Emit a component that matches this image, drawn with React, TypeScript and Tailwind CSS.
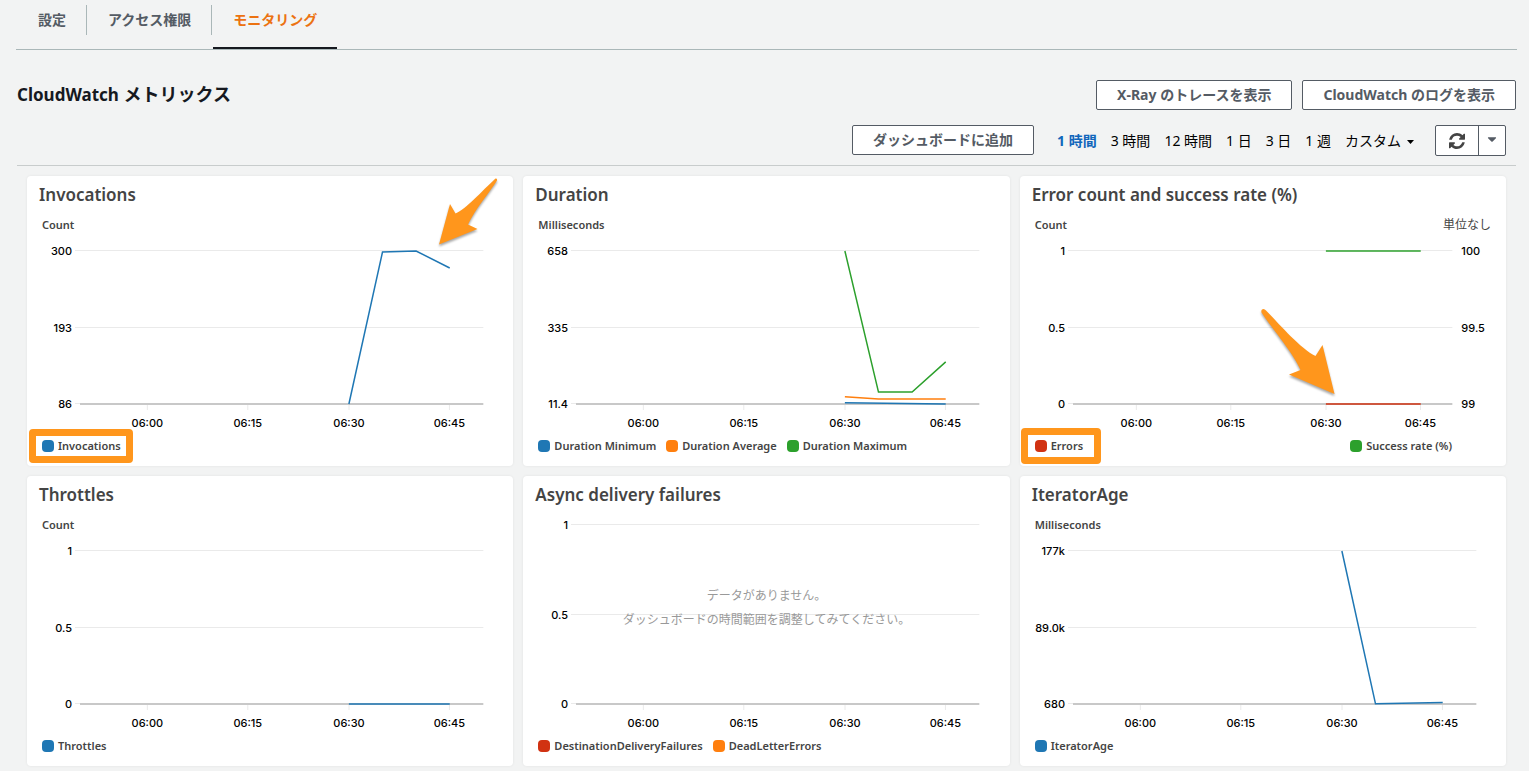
import { type ReactNode } from "react";
import { FaCaretDown } from "react-icons/fa";

type Side = "left" | "right";

interface Series {
  name: string;
  color: string;
  side?: Side;
  // minute offsets inside the visible hour (0 - 60) and y as a 0 - 1 share
  points: [number, number][];
}

interface Metric {
  title: string;
  unit?: string;
  rightUnit?: string;
  ticks: string[];
  rightTicks?: string[];
  series: Series[];
  empty?: string[];
}

const BLUE = "#1f77b4";
const ORANGE = "#ff7f0e";
const GREEN = "#2ca02c";
const RED = "#d13212";
const MARKER = "#ff961c";

const metrics: Metric[] = [
  {
    title: "Invocations",
    unit: "Count",
    ticks: ["300", "193", "86"],
    series: [
      {
        name: "Invocations",
        color: BLUE,
        points: [
          [40, 0],
          [45, 0.993],
          [50, 1],
          [55, 0.889],
        ],
      },
    ],
  },
  {
    title: "Duration",
    unit: "Milliseconds",
    ticks: ["658", "335", "11.4"],
    series: [
      {
        name: "Duration Minimum",
        color: BLUE,
        points: [
          [40, 0.008],
          [55, 0],
        ],
      },
      {
        name: "Duration Average",
        color: ORANGE,
        points: [
          [40, 0.048],
          [45, 0.033],
          [55, 0.033],
        ],
      },
      {
        name: "Duration Maximum",
        color: GREEN,
        points: [
          [40, 1],
          [45, 0.078],
          [50, 0.078],
          [55, 0.275],
        ],
      },
    ],
  },
  {
    title: "Error count and success rate (%)",
    unit: "Count",
    rightUnit: "単位なし",
    ticks: ["1", "0.5", "0"],
    rightTicks: ["100", "99.5", "99"],
    series: [
      {
        name: "Errors",
        color: RED,
        points: [
          [40, 0],
          [55, 0],
        ],
      },
      {
        name: "Success rate (%)",
        color: GREEN,
        side: "right",
        points: [
          [40, 1],
          [55, 1],
        ],
      },
    ],
  },
  {
    title: "Throttles",
    unit: "Count",
    ticks: ["1", "0.5", "0"],
    series: [
      {
        name: "Throttles",
        color: BLUE,
        points: [
          [40, 0],
          [55, 0],
        ],
      },
    ],
  },
  {
    title: "Async delivery failures",
    ticks: ["1", "0.5", "0"],
    empty: [
      "データがありません。",
      "ダッシュボードの時間範囲を調整してみてください。",
    ],
    series: [
      { name: "DestinationDeliveryFailures", color: RED, points: [] },
      { name: "DeadLetterErrors", color: ORANGE, points: [] },
    ],
  },
  {
    title: "IteratorAge",
    unit: "Milliseconds",
    ticks: ["177k", "89.0k", "680"],
    series: [
      {
        name: "IteratorAge",
        color: BLUE,
        points: [
          [40, 1],
          [45, 0.001],
          [55, 0.009],
        ],
      },
    ],
  },
];

const times = [
  { label: "06:00", at: "16.7%" },
  { label: "06:15", at: "41.6%" },
  { label: "06:30", at: "66.7%" },
  { label: "06:45", at: "91.6%" },
];

const ranges = ["1 時間", "3 時間", "12 時間", "1 日", "3 日", "1 週"];

const Plot = ({ metric }: { metric: Metric }) => {
  const height = metric.unit ? 153 : 179;
  const rows = [0, Math.round(height / 2), height];

  return (
    <svg
      className="block w-full overflow-visible font-['Inter'] text-[11px] font-medium"
      height={height + 26}
      role="img"
      aria-label={metric.title}
    >
      {rows.map((y, i) => (
        <g key={y}>
          <line
            x1="-5"
            x2={i === 2 ? "0" : "100%"}
            y1={y - 0.5}
            y2={y - 0.5}
            stroke="#eaeaea"
          />
          <text x="-8" y={y + 4} textAnchor="end">
            {metric.ticks[i]}
          </text>
        </g>
      ))}
      {metric.rightTicks && (
        <svg x="100%" className="overflow-visible">
          {metric.rightTicks.map((tick, i) => (
            <text key={tick} x="9" y={rows[i] + 4}>
              {tick}
            </text>
          ))}
        </svg>
      )}
      <line x1="0" x2="100%" y1={height} y2={height} stroke="#c8c8c8" strokeWidth="2" />
      {times.map(({ label, at }) => (
        <g key={label}>
          <line x1={at} x2={at} y1={height + 1} y2={height + 6} stroke="#eaeaea" />
          <text x={at} y={height + 23} textAnchor="middle">
            {label}
          </text>
        </g>
      ))}
      <svg
        viewBox={`0 0 60 ${height}`}
        height={height}
        preserveAspectRatio="none"
        className="overflow-visible"
      >
        {metric.series.map(({ name, color, points }) => (
          <polyline
            key={name}
            points={points
              .map(([x, y]) => `${x},${height - y * height}`)
              .join(" ")}
            fill="none"
            stroke={color}
            strokeWidth="1.5"
            vectorEffect="non-scaling-stroke"
          />
        ))}
      </svg>
    </svg>
  );
};

const Legend = ({ series }: { series: Series[] }) => (
  <ul className="flex gap-[10px]">
    {series.map(({ name, color }) => (
      <li key={name} className="flex items-center gap-1">
        <svg width="12" height="12" aria-hidden="true">
          <rect width="12" height="12" rx="4" fill={color} />
        </svg>
        {name}
      </li>
    ))}
  </ul>
);

const MetricCard = ({
  metric,
  children,
}: {
  metric: Metric;
  children?: ReactNode;
}) => {
  const left = metric.series.filter((s) => s.side !== "right");
  const right = metric.series.filter((s) => s.side === "right");

  return (
    <section className="relative rounded bg-white pb-1 text-[11px] font-semibold text-[#444] shadow-[0_0_3px_rgba(0,0,0,0.07)]">
      <h3 className="px-3 pt-1 text-[17px] leading-[30px]">{metric.title}</h3>
      {metric.unit && (
        <div className="flex h-[26px] justify-between px-[15px] pt-1 leading-[22px]">
          <span>{metric.unit}</span>
          <span className="text-xs leading-[22px] font-normal">
            {metric.rightUnit}
          </span>
        </div>
      )}
      <div
        className={`relative pt-[15px] pl-[53px] ${
          metric.rightTicks ? "pr-[54px]" : "pr-[30px]"
        }`}
      >
        <div className="text-black">
          <Plot metric={metric} />
        </div>
        {metric.empty && (
          <div className="absolute inset-x-0 top-[74px] text-center text-xs leading-6 font-normal text-[#999]">
            {metric.empty.map((line) => (
              <p key={line}>{line}</p>
            ))}
          </div>
        )}
      </div>
      <div
        className={`flex h-8 items-center justify-between pl-[15px] ${
          metric.rightTicks ? "pr-[54px]" : "pr-[30px]"
        }`}
      >
        <Legend series={left} />
        {right.length > 0 && <Legend series={right} />}
      </div>
      {children}
    </section>
  );
};

const InvocationMarks = () => (
  <>
    <div className="absolute bottom-[3px] left-[2px] h-[34px] w-[104px] rounded-[4px] border-[7px] border-[#ff961c]" />
    <svg
      className="absolute top-0 right-[13px] drop-shadow-[0_2px_1px_rgba(0,0,0,0.35)]"
      width="62"
      height="70"
      aria-hidden="true"
    >
      <path
        d="M57.5 2.5Q59.5 2 59 4.5C52 16 37 33 30 48.5L39.5 53L1 68.5L12 28L17.5 37.5C28 33 44 15 57.5 2.5Z"
        fill={MARKER}
      />
    </svg>
  </>
);

const ErrorMarks = () => (
  <>
    <div className="absolute bottom-[2px] left-px h-9 w-20 rounded-[4px] border-[7px] border-[#ff961c]" />
    <svg
      className="absolute top-[132px] right-[170px] drop-shadow-[0_2px_1px_rgba(0,0,0,0.35)]"
      width="76"
      height="88"
      aria-hidden="true"
    >
      <path
        d="M2 1.5Q4 0 6 2.5C21 18 41 41 55.5 48L62.5 37L74.5 86L29 66.5L40.5 62C34 46 13 22 1.5 4.5Q1 2.5 2 1.5Z"
        fill={MARKER}
      />
    </svg>
  </>
);

const buttonStyle =
  "h-[30px] rounded-[2px] border border-[#545b64] bg-white px-5 text-sm font-bold text-[#545b64] hover:bg-gray-50";

const tabLabel = "block pt-[6px] leading-5";
const tabDivider = "mt-px h-[30px] w-px bg-[#aab7b8]";

export default function App() {
  return (
    <main className="min-h-screen bg-[#f2f3f3] pb-[5px] font-['Noto_Sans','Noto_Sans_CJK_JP',sans-serif] text-black">
      <nav className="mr-3 ml-4 flex border-b border-[#aab7b8] text-sm font-bold text-[#545b64]">
        <a href="#settings" className="flex gap-5 pt-1 pb-[14px] pl-[22px]">
          <span className={tabLabel}>設定</span>
          <span className={tabDivider} />
        </a>
        <a href="#permissions" className="flex gap-5 pt-1 pb-[14px] pl-[21px]">
          <span className={tabLabel}>アクセス権限</span>
          <span className={tabDivider} />
        </a>
        <a
          href="#monitoring"
          aria-current="page"
          className="ml-px border-b-2 border-[#16191f] px-5 pt-1 pb-[14px] text-[#ec7211]"
        >
          <span className={tabLabel}>モニタリング</span>
        </a>
      </nav>

      <header className="mr-[13px] ml-[17px] border-b border-[#c8cccc] pt-[29px] pb-[9px]">
        <div className="flex items-center justify-between">
          <h2 className="text-lg leading-[30px] font-bold text-[#16191f]">
            <span className="text-[17px]">CloudWatch</span> メトリックス
          </h2>
          <div className="flex gap-[10px]">
            <button type="button" className={buttonStyle}>
              X-Ray のトレースを表示
            </button>
            <button type="button" className={buttonStyle}>
              CloudWatch のログを表示
            </button>
          </div>
        </div>
        <div className="mt-[15px] flex items-start justify-end pr-[10px]">
          <button type="button" className={buttonStyle}>
            ダッシュボードに追加
          </button>
          <div className="ml-[23px] flex h-[31px] items-center gap-[14px] text-sm">
            {ranges.map((range, i) => (
              <button
                key={range}
                type="button"
                className={i === 0 ? "font-bold text-[#1166bb]" : ""}
              >
                {range}
              </button>
            ))}
            <button type="button" className="flex items-center gap-[6px]">
              カスタム
              <svg width="7" height="4" className="mt-[2px]" aria-hidden="true">
                <path d="M0 0h7L3.5 4z" />
              </svg>
            </button>
          </div>
          <div className="ml-[21px] flex h-[31px] rounded-[2px] border border-[#545b64] bg-white">
            <button
              type="button"
              aria-label="更新"
              className="flex w-[43px] items-center justify-center border-r border-[#545b64]"
            >
              <svg width="16" height="16" viewBox="0 0 1536 1536" fill="#444" aria-hidden="true">
                <path d="M1511 928q0 5-1 7-64 268-268 434.500T764 1536q-146 0-282.500-55T238 1324l-129 129q-19 19-45 19t-45-19-19-45V960q0-26 19-45t45-19h448q26 0 45 19t19 45-19 45l-137 137q71 66 161 102t187 36q134 0 250-65t186-179q11-17 53-117 8-23 30-23h192q13 0 22.500 9.500t9.500 22.500zm25-800v448q0 26-19 45t-45 19h-448q-26 0-45-19t-19-45 19-45l138-138Q969 256 768 256q-134 0-250 65T332 500q-11 17-53 117-8 23-30 23H50q-13 0-22.500-9.500T18 608v-7q65-268 270-434.500T768 0q146 0 284 55.500T1297 212l130-129q19-19 45-19t45 19 19 45z" />
              </svg>
            </button>
            <button
              type="button"
              aria-label="更新間隔"
              className="flex w-[26px] items-center justify-center pb-[3px] text-[#545b64]"
            >
              <FaCaretDown size={14} />
            </button>
          </div>
        </div>
      </header>

      <div className="mt-[10px] mr-[23px] ml-[27px] grid grid-cols-3 gap-[10px]">
        {metrics.map((metric) => (
          <MetricCard key={metric.title} metric={metric}>
            {metric.title === "Invocations" && <InvocationMarks />}
            {metric.title.startsWith("Error") && <ErrorMarks />}
          </MetricCard>
        ))}
      </div>
    </main>
  );
}
